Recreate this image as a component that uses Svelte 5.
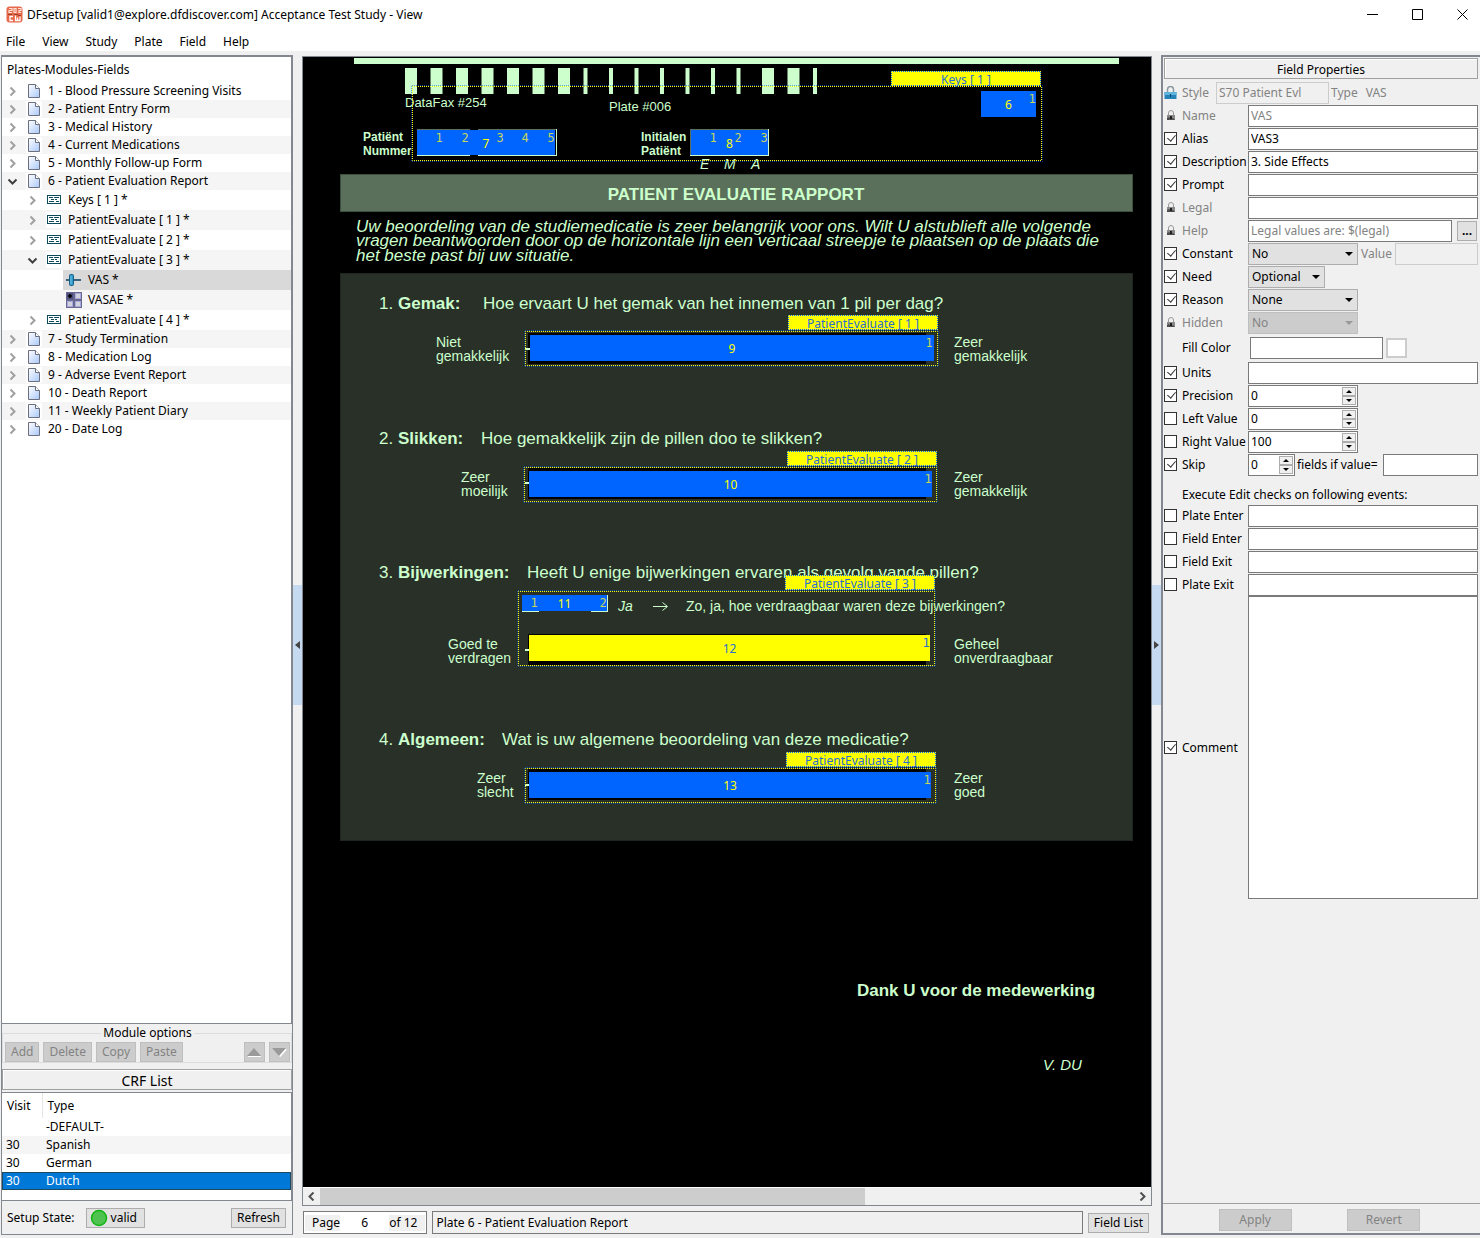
<script lang="ts">
  type Row = { id: string; level: number; open?: boolean; leaf?: "slider" | "check"; label: string };

  const menus = ["File", "View", "Study", "Plate", "Field", "Help"];

  const rows: Row[] = [
    { id: "p1", level: 0, label: "1 - Blood Pressure Screening Visits" },
    { id: "p2", level: 0, label: "2 - Patient Entry Form" },
    { id: "p3", level: 0, label: "3 - Medical History" },
    { id: "p4", level: 0, label: "4 - Current Medications" },
    { id: "p5", level: 0, label: "5 - Monthly Follow-up Form" },
    { id: "p6", level: 0, open: true, label: "6 - Patient Evaluation Report" },
    { id: "m0", level: 1, label: "Keys [ 1 ] *" },
    { id: "m1", level: 1, label: "PatientEvaluate [ 1 ] *" },
    { id: "m2", level: 1, label: "PatientEvaluate [ 2 ] *" },
    { id: "m3", level: 1, open: true, label: "PatientEvaluate [ 3 ] *" },
    { id: "f1", level: 2, leaf: "slider", label: "VAS *" },
    { id: "f2", level: 2, leaf: "check", label: "VASAE *" },
    { id: "m4", level: 1, label: "PatientEvaluate [ 4 ] *" },
    { id: "p7", level: 0, label: "7 - Study Termination" },
    { id: "p8", level: 0, label: "8 - Medication Log" },
    { id: "p9", level: 0, label: "9 - Adverse Event Report" },
    { id: "p10", level: 0, label: "10 - Death Report" },
    { id: "p11", level: 0, label: "11 - Weekly Patient Diary" },
    { id: "p20", level: 0, label: "20 - Date Log" },
  ];
  let selected = $state("f1");

  const crfs = [
    { visit: "", type: "-DEFAULT-" },
    { visit: "30", type: "Spanish" },
    { visit: "30", type: "German" },
    { visit: "30", type: "Dutch" },
  ];
  let crf = $state("Dutch");

  // barcode across the top of the page: wide = 1, narrow = 0
  const barcode = [1, 1, 1, 1, 1, 1, 1, 0, 0, 0, 0, 0, 0, 0, 1, 1, 0];

  const questions = [
    { n: "1.", y: 251, name: "Gemak:", x: 179, text: "Hoe ervaart U het gemak van het innemen van 1 pil per dag?" },
    { n: "2.", y: 386, name: "Slikken:", x: 177, text: "Hoe gemakkelijk zijn de pillen doo te slikken?" },
    { n: "3.", y: 520, name: "Bijwerkingen:", x: 223, text: "Heeft U enige bijwerkingen ervaren als gevolg vande pillen?" },
    { n: "4.", y: 687, name: "Algemeen:", x: 198, text: "Wat is uw algemene beoordeling van deze medicatie?" },
  ];

  const scaleLabels = [
    { x: 132, y: 289, lines: ["Niet", "gemakkelijk"] },
    { x: 650, y: 289, lines: ["Zeer", "gemakkelijk"] },
    { x: 157, y: 424, lines: ["Zeer", "moeilijk"] },
    { x: 650, y: 424, lines: ["Zeer", "gemakkelijk"] },
    { x: 144, y: 591, lines: ["Goed te", "verdragen"] },
    { x: 650, y: 591, lines: ["Geheel", "onverdraagbaar"] },
    { x: 173, y: 725, lines: ["Zeer", "slecht"] },
    { x: 650, y: 725, lines: ["Zeer", "goed"] },
  ];

  // black wells of the analogue scales, with the tick at the left end
  const wells = [
    { y: 275, tick: 291 },
    { y: 410, tick: 425 },
    { y: 576, tick: 592 },
    { y: 711, tick: 727 },
  ];

  const modules = [
    { x: 108, y: 28, w: 630, h: 75, tagX: 587, tagY: 13, label: "Keys [ 1 ]" },
    { x: 221, y: 273, w: 413, h: 35, tagX: 484, tagY: 257, label: "PatientEvaluate [ 1 ]" },
    { x: 220, y: 409, w: 413, h: 35, tagX: 483, tagY: 393, label: "PatientEvaluate [ 2 ]" },
    { x: 214, y: 533, w: 417, h: 75, tagX: 481, tagY: 517, label: "PatientEvaluate [ 3 ]" },
    { x: 221, y: 710, w: 411, h: 35, tagX: 482, tagY: 694, label: "PatientEvaluate [ 4 ]" },
  ];

  const fields = [
    { n: 6, x: 677, y: 33, w: 55, h: 26, marks: [728] },
    { n: 7, x: 113, y: 72, w: 138, h: 25, marks: [135, 161, 196, 221, 247] },
    { n: 8, x: 387, y: 72, w: 77, h: 25, marks: [409, 434, 460] },
    { n: 9, x: 226, y: 277, w: 404, h: 26, marks: [625] },
    { n: 10, x: 225, y: 413, w: 403, h: 26, marks: [624] },
    { n: 11, x: 218, y: 537, w: 85, h: 16, marks: [230, 299] },
    { n: 12, x: 225, y: 577, w: 401, h: 26, marks: [622], active: true },
    { n: 13, x: 225, y: 714, w: 402, h: 26, marks: [623] },
  ];
</script>

{#snippet lock()}
  <svg class="lock" width="13" height="11" viewBox="0 0 13 11" aria-hidden="true">
    <path d="M4.500 5V3a2.500 2.500 0 0 1 5 0v2" fill="none" stroke="#999" />
    <rect x="3" y="5" width="8" height="5" fill="#8a8a8a" />
    <path d="M3 8l2-1 2 2 2-1 2 2H3z" fill="#4d4d4d" />
    <rect x="6" y="6" width="2" height="3" fill="#222" />
  </svg>
{/snippet}

{#snippet tick(name: string, checked: boolean)}
  <input class="tick" type="checkbox" aria-label={name + " enabled"} {checked} />
{/snippet}

{#snippet textRow(id: string, name: string, checked: boolean, value: string)}
  <div class="row">
    {@render tick(name, checked)}
    <label for={id}>{name}</label>
    <input class="text grow" {id} type="text" {value} />
  </div>
{/snippet}

{#snippet arrow()}
  <svg class="arrow" width="8" height="4" viewBox="0 0 8 4" aria-hidden="true"><path d="M0 0h8L4 4z" /></svg>
{/snippet}

{#snippet spinner(name: string)}
  <span class="steps">
    <button aria-label={name + " up"}><svg width="6" height="3" viewBox="0 0 6 3"><path d="M0 3h6L3 0z" /></svg></button>
    <button aria-label={name + " down"}><svg width="6" height="3" viewBox="0 0 6 3"><path d="M0 0h6L3 3z" /></svg></button>
  </span>
{/snippet}

{#snippet spinRow(id: string, name: string, checked: boolean, value: string)}
  <div class="row">
    {@render tick(name, checked)}
    <label for={id}>{name}</label>
    <span class="spin wide">
      <input {id} type="text" {value} />
      {@render spinner(name)}
    </span>
  </div>
{/snippet}

<div class="app">
  <header>
    <div class="titlebar">
      <svg width="17" height="17" viewBox="0 0 17 17" aria-hidden="true">
        <rect x="0.500" y="0.500" width="16" height="16" rx="3" fill="#e8694a" />
        <path d="M3 2.500h3v2H3v2h3M8 2.500h2v4H8zM12 2.500h3v2h-2v2h2" fill="none" stroke="#fbe3da" stroke-width="1.200" />
        <path d="M2 8.500h4M8 8.500h3l2 1h2" fill="none" stroke="#9c3f2a" stroke-width="1" />
        <path d="M7 10.500H4v4h3M9.500 9.500v5h2v-3M14 10.500v4h-2" fill="none" stroke="#fff" stroke-width="1.300" />
      </svg>
      <h1>DFsetup [valid1@explore.dfdiscover.com] Acceptance Test Study - View</h1>
      <div class="winbuttons">
        <button aria-label="Minimize"><svg width="11" height="11" viewBox="0 0 11 11"><path d="M0 5.500h11" /></svg></button>
        <button aria-label="Maximize"><svg width="11" height="11" viewBox="0 0 11 11"><path d="M.5.5h10v10H.5z" /></svg></button>
        <button aria-label="Close"><svg width="11" height="11" viewBox="0 0 11 11"><path d="M.5.5l10 10M10.500.5l-10 10" /></svg></button>
      </div>
    </div>
    <nav>
      {#each menus as menu}
        <button>{menu}</button>
      {/each}
    </nav>
  </header>

  <main>
    <section class="left">
      <div class="tree">
        <h2>Plates-Modules-Fields</h2>
        <ul role="tree">
          {#each rows as row (row.id)}
            <li
              role="treeitem"
              aria-selected={selected === row.id}
              class="level{row.level}"
              class:selected={selected === row.id}
            >
              {#if !row.leaf}
                <button class="expander" class:open={row.open} aria-label="Toggle {row.label}">
                  <svg width="11" height="11" viewBox="0 0 11 11">
                    {#if row.open}
                      <path d="M1.500 3.500l4 4 4-4" />
                    {:else}
                      <path d="M3.500 1.500l4 4-4 4" />
                    {/if}
                  </svg>
                </button>
              {/if}
              <button class="item" onclick={() => (selected = row.id)}>
                {#if row.leaf === "slider"}
                  <svg width="16" height="16" viewBox="0 0 16 16">
                    <path d="M0 8h15" stroke="#3a6480" stroke-width="2" />
                    <rect x="3.500" y="2.500" width="4" height="11" rx="1" fill="#2e9bc9" stroke="#1b5e86" />
                    <path d="M5 4v8" stroke="#6cc0e6" />
                  </svg>
                {:else if row.leaf === "check"}
                  <svg width="16" height="16" viewBox="0 0 16 16">
                    <rect width="16" height="16" fill="#68688c" />
                    <rect x="1.500" y="1.500" width="5" height="5" fill="#7c7cb4" stroke="#4c4c84" />
                    <rect x="9.500" y="1.500" width="5" height="5" fill="#d2d2dc" stroke="#a8a8e0" />
                    <rect x="1.500" y="9.500" width="5" height="5" fill="#d2d2dc" stroke="#a8a8e0" />
                    <rect x="9.500" y="9.500" width="5" height="5" fill="#d2d2dc" stroke="#a8a8e0" />
                    <circle cx="4" cy="4" r="2" fill="#000" />
                  </svg>
                {:else if row.level === 1}
                  <svg width="16" height="16" viewBox="0 0 16 16">
                    <rect width="16" height="16" fill="#fff" />
                    <rect x="1.500" y="3.500" width="13" height="8" fill="#fff" stroke="#0d4a5c" />
                    <path d="M3 5.500h4M8 5.500h5M5 7.500h3M9 7.500h2M3 9.500h5M10 9.500h3" stroke="#0d4a5c" />
                  </svg>
                {:else}
                  <svg width="16" height="16" viewBox="0 0 16 16">
                    <defs>
                      <linearGradient id="sheet-{row.id}" x1="0" y1="0" x2="1" y2="1">
                        <stop offset="0" stop-color="#fff" />
                        <stop offset="1" stop-color="#a9c8fa" />
                      </linearGradient>
                    </defs>
                    <rect width="16" height="16" fill="#fff" />
                    <path d="M2.500 1.500h7l4 4v9h-11z" fill="url(#sheet-{row.id})" stroke="#6c6f7c" />
                    <path d="M9.500 1.500v4h4" fill="#fff" stroke="#6c6f7c" />
                  </svg>
                {/if}
                <span>{row.label}</span>
              </button>
            </li>
          {/each}
        </ul>
      </div>

      <fieldset>
        <legend>Module options</legend>
        <button class="btn" disabled>Add</button>
        <button class="btn" disabled>Delete</button>
        <button class="btn" disabled>Copy</button>
        <button class="btn" disabled>Paste</button>
        <button class="btn move first" disabled aria-label="Move up">
          <svg width="15" height="9" viewBox="0 0 15 9"><path d="M1 8.500h13" stroke="#fff" /><path d="M0 8h14L7 0z" fill="#9a9a9a" /></svg>
        </button>
        <button class="btn move" disabled aria-label="Move down">
          <svg width="15" height="9" viewBox="0 0 15 9"><path d="M14 1L7.500 8.500" stroke="#fff" stroke-width="2" /><path d="M0 0h14L7 8z" fill="#9a9a9a" /></svg>
        </button>
      </fieldset>

      <h2 class="caption crf-title">CRF List</h2>
      <div class="crf">
        <table>
          <thead>
            <tr><th>Visit</th><th>Type</th></tr>
          </thead>
          <tbody>
            {#each crfs as c}
              <tr class:current={crf === c.type} onclick={() => (crf = c.type)}>
                <td>{c.visit}</td>
                <td>{c.type}</td>
              </tr>
            {/each}
          </tbody>
        </table>
      </div>
      <div class="state">
        <span>Setup State:</span>
        <button class="btn valid">
          <svg width="18" height="18" viewBox="0 0 18 18" aria-hidden="true">
            <circle cx="9" cy="9" r="7.500" fill="#4fc24f" stroke="#12b512" stroke-width="1.500" />
          </svg>
          valid
        </button>
        <button class="btn refresh">Refresh</button>
      </div>
    </section>

    <button class="splitter" aria-label="Collapse tree">
      <svg width="5" height="8" viewBox="0 0 5 8"><path d="M5 0v8L0 4z" /></svg>
    </button>

    <section class="center">
      <div class="view">
        <div class="canvas">
          <svg class="page" width="848" height="1128" viewBox="0 0 848 1128" role="img" aria-label="Plate 6">
            <rect class="ink" x="50" y="0" width="765" height="6" />
            {#each barcode as wide, i}
              <rect class="ink" x={101 + i * 25.5} y="10" width={wide ? 12 : 4} height="26" />
            {/each}
            <text class="small" x="101" y="49">DataFax #254</text>
            <text class="small" x="305" y="53">Plate #006</text>
            <text class="key" x="59" y="83">Patiënt</text>
            <text class="key" x="59" y="97">Nummer</text>
            <text class="key" x="337" y="83">Initialen</text>
            <text class="key" x="337" y="97">Patiënt</text>
            <g class="label italic">
              <text x="396" y="111">E</text>
              <text x="420" y="111">M</text>
              <text x="447" y="111">A</text>
            </g>
            <path class="dim" d="M113 71.500h53M174 71.500h78M386 71.500h79M386.500 71v27" />
            <path class="bright" d="M113 97.500h53M174 97.500h79M252.500 71v27M386 97.500h79M464.500 71v27" />

            <rect x="36.500" y="116.500" width="792" height="37" fill="#5a705a" stroke="#3f4f3f" />
            <text class="title" x="432" y="142">PATIENT EVALUATIE RAPPORT</text>

            <g class="intro">
              <text x="52" y="174">Uw beoordeling van de studiemedicatie is zeer belangrijk voor ons. Wilt U alstublieft alle volgende</text>
              <text x="52" y="188">vragen beantwoorden door op de horizontale lijn een verticaal streepje te plaatsen op de plaats die</text>
              <text x="52" y="203">het beste past bij uw situatie.</text>
            </g>

            <rect x="36.500" y="215.500" width="792" height="567" fill="#283028" stroke="#1f261f" />
            {#each questions as q}
              <g class="question">
                <text x="75" y={q.y}>{q.n}</text>
                <text class="strong" x="94" y={q.y}>{q.name}</text>
                <text x={q.x} y={q.y}>{q.text}</text>
              </g>
            {/each}
            {#each scaleLabels as s}
              <g class="label">
                <text x={s.x} y={s.y}>{s.lines[0]}</text>
                <text x={s.x} y={s.y + 14}>{s.lines[1]}</text>
              </g>
            {/each}
            {#each wells as w}
              <rect x="224" y={w.y} width="398" height="31" />
              <path class="bright thick" d="M221 {w.tick}h5" />
            {/each}
            <path class="bright" d="M218 553.500h17M287 553.500h17M303.500 537v17" />
            <text class="label italic" x="314" y="553">Ja</text>
            <path class="bright" d="M349 548.500h14M358.500 544.500l5 4-5 4" />
            <text class="label" x="382" y="553">Zo, ja, hoe verdraagbaar waren deze bijwerkingen?</text>
            <text class="title" x="672" y="938">Dank U voor de medewerking</text>
            <text class="sign" x="739" y="1012">V. DU</text>

            {#each modules as m}
              <rect class="dots blue outer" x={m.x - 0.5} y={m.y - 0.5} width={m.w + 1} height={m.h + 1} />
              <rect class="dots" x={m.x + 0.5} y={m.y + 0.5} width={m.w - 1} height={m.h - 1} />
              <rect x={m.tagX} y={m.tagY} width="150" height="15" fill="#ff0" />
              <rect class="dots blue" x={m.tagX + 0.5} y={m.tagY + 0.5} width="149" height="14" />
              <text class="tag" x={m.tagX + 75} y={m.tagY + 13}>{m.label}</text>
            {/each}
            {#each fields as f}
              <g class="field" class:active={f.active}>
                <rect x={f.x} y={f.y} width={f.w} height={f.h} />
                <text class="num" x={f.x + f.w / 2} y={f.y + Math.round(f.h / 2) + 5}>{f.n}</text>
                {#each f.marks as x, i}
                  <text class="mark" {x} y={f.y + 12}>{i + 1}</text>
                {/each}
              </g>
            {/each}
          </svg>
        </div>
        <div class="scroll">
          <button aria-label="Scroll left"><svg width="7" height="9" viewBox="0 0 7 9"><path d="M5.500.5l-4 4 4 4" /></svg></button>
          <div class="track"><div class="thumb"></div></div>
          <button aria-label="Scroll right"><svg width="7" height="9" viewBox="0 0 7 9"><path d="M1.500.5l4 4-4 4" /></svg></button>
        </div>
      </div>
      <div class="status">
        <div class="pager">
          <label for="page">Page</label>
          <input id="page" type="text" value="6" />
          <span>of 12</span>
        </div>
        <div class="plate">Plate 6 - Patient Evaluation Report</div>
        <button class="btn">Field List</button>
      </div>
    </section>

    <button class="splitter" aria-label="Collapse properties">
      <svg width="5" height="8" viewBox="0 0 5 8"><path d="M0 0v8l5-4z" /></svg>
    </button>

    <section class="right">
      <h2 class="caption">Field Properties</h2>
      <div class="props">
        <div class="row style off">
          <svg class="lock" width="13" height="14" viewBox="0 0 13 14" aria-hidden="true">
            <path d="M3.500 7V3.500a3 3 0 0 1 6 0V7" fill="none" stroke="#8a979d" stroke-width="1.500" />
            <rect x="0.500" y="6" width="12" height="7" fill="#2583b8" />
            <rect x="0.500" y="6" width="12" height="3" fill="#5fb4de" />
            <rect x="6" y="8" width="1" height="3" fill="#0c3f63" />
          </svg>
          <label for="style">Style</label>
          <input class="text" id="style" type="text" value="S70 Patient Evl" disabled />
          <span>Type</span>
          <span class="type">VAS</span>
        </div>
        <div class="row off">
          {@render lock()}
          <label for="name">Name</label>
          <input class="text grow" id="name" type="text" value="VAS" readonly />
        </div>
        {@render textRow("alias", "Alias", true, "VAS3")}
        {@render textRow("desc", "Description", true, "3. Side Effects")}
        {@render textRow("prompt", "Prompt", true, "")}
        <div class="row off">
          {@render lock()}
          <label for="legal">Legal</label>
          <input class="text grow" id="legal" type="text" readonly />
        </div>
        <div class="row off">
          {@render lock()}
          <label for="help">Help</label>
          <input class="text grow" id="help" type="text" value="Legal values are: $(legal)" readonly />
          <button class="btn more" aria-label="Edit help">...</button>
        </div>
        <div class="row">
          {@render tick("Constant", true)}
          <label for="constant">Constant</label>
          <span class="select wide">
            <select id="constant"><option>No</option><option>Yes</option></select>
            {@render arrow()}
          </span>
          <label class="value off" for="value">Value</label>
          <input class="text grow" id="value" type="text" disabled />
        </div>
        <div class="row">
          {@render tick("Need", true)}
          <label for="need">Need</label>
          <span class="select">
            <select id="need"><option>Optional</option><option>Required</option></select>
            {@render arrow()}
          </span>
        </div>
        <div class="row">
          {@render tick("Reason", true)}
          <label for="reason">Reason</label>
          <span class="select wide">
            <select id="reason"><option>None</option></select>
            {@render arrow()}
          </span>
        </div>
        <div class="row off">
          {@render lock()}
          <label for="hidden">Hidden</label>
          <span class="select wide">
            <select id="hidden" disabled><option>No</option></select>
            {@render arrow()}
          </span>
        </div>
        <div class="row fill">
          <span class="tick-space"></span>
          <label for="fill">Fill Color</label>
          <input class="text" id="fill" type="text" />
          <button class="swatch" aria-label="Pick fill color"></button>
        </div>
        {@render textRow("units", "Units", true, "")}
        {@render spinRow("precision", "Precision", true, "0")}
        {@render spinRow("left", "Left Value", false, "0")}
        {@render spinRow("right", "Right Value", false, "100")}
        <div class="row">
          {@render tick("Skip", true)}
          <label for="skip">Skip</label>
          <span class="spin">
            <input id="skip" type="text" value="0" />
            {@render spinner("Skip")}
          </span>
          <label class="inline" for="skip-value">fields if value=</label>
          <input class="text grow" id="skip-value" type="text" />
        </div>
        <p>Execute Edit checks on following events:</p>
        {@render textRow("plate-enter", "Plate Enter", false, "")}
        {@render textRow("field-enter", "Field Enter", false, "")}
        {@render textRow("field-exit", "Field Exit", false, "")}
        {@render textRow("plate-exit", "Plate Exit", false, "")}
        <div class="row comment">
          {@render tick("Comment", true)}
          <label for="comment">Comment</label>
          <textarea id="comment"></textarea>
        </div>
      </div>
      <footer>
        <button class="btn" disabled>Apply</button>
        <button class="btn" disabled>Revert</button>
      </footer>
    </section>
  </main>
</div>

<style>
  :global(body) {
    background: #f0f0f0;
  }

  .app,
  .app * {
    box-sizing: border-box;
  }

  .app {
    --line: #828790;
    height: 100vh;
    display: flex;
    flex-direction: column;
    font: 12px/16px "Noto Sans", "Open Sans", sans-serif;
    color: #000;
  }

  button,
  input,
  select,
  textarea {
    font: inherit;
    color: inherit;
    margin: 0;
    padding: 0;
    border: 0;
    border-radius: 0;
    background: none;
  }

  h1,
  h2,
  p,
  ul {
    margin: 0;
    padding: 0;
    font-size: 12px;
    font-weight: normal;
  }

  svg {
    display: block;
    flex: none;
  }

  header {
    background: #fff;
  }

  .titlebar {
    height: 29px;
    display: flex;
    align-items: center;
    gap: 4px;
    padding-left: 6px;

    h1 {
      flex: 1;
    }
  }

  .winbuttons {
    display: flex;
    align-self: stretch;
    gap: 10px;

    button {
      width: 35px;
      display: grid;
      place-items: center;
    }

    path {
      fill: none;
      stroke: #000;
    }
  }

  nav {
    height: 22px;
    display: flex;
    align-items: center;
    gap: 17px;
    padding: 4px 6px 0;
  }

  main {
    flex: 1;
    min-height: 0;
    display: grid;
    grid-template-columns: 292px 9px minmax(0, 1fr) 9px 319px;
    padding: 4px 0 3px 1px;
  }

  section {
    min-height: 0;
    display: flex;
    flex-direction: column;
  }

  .left {
    border: 1px solid var(--line);
  }

  .tree {
    flex: 1;
    min-height: 0;
    overflow: hidden;
    background: #fff;
    border: 1px solid var(--line);
    border-width: 1px 1px 1px 0;

    h2 {
      height: 25px;
      padding: 5px;
    }

    ul {
      list-style: none;
    }

    li {
      display: flex;
      align-items: center;
      height: 18px;
      padding-left: 5px;
    }

    li:nth-child(even) {
      background: #f5f5f5;
    }

    .level1 {
      height: 20px;
      padding-left: 25px;
    }

    .level2 {
      height: 20px;
      padding-left: 61px;
    }

    .selected {
      background: #fff;
    }

    .selected .item {
      background: #d9d9d9;
    }
  }

  .expander {
    margin-right: 5px;

    path {
      fill: none;
      stroke: #a0a0a0;
      stroke-width: 2;
    }

    &.open path {
      stroke: #404040;
    }
  }

  .item {
    flex: 1;
    height: 100%;
    display: flex;
    align-items: center;
    gap: 6px;
    padding-left: 3px;
    text-align: left;
    white-space: nowrap;
  }

  .btn {
    height: 20px;
    padding: 0 5px;
    line-height: 16px;
    background: #e1e1e1;
    border: 1px solid #adadad;

    &:disabled {
      color: #838383;
      background: #ccc;
      border-color: #bfbfbf;
    }
  }

  fieldset {
    display: flex;
    align-items: center;
    gap: 4px;
    margin: 1px 0 6px;
    padding: 1px 1px 0 2px;
    border: 1px solid #dcdcdc;
    min-width: 0;

    legend {
      margin: 0 auto;
      padding: 0 2px;
    }

    .move {
      width: 21px;
      padding: 0;
      display: grid;
      place-items: center;
    }

    .first {
      margin-left: auto;
    }
  }

  .caption {
    height: 21px;
    line-height: 21px;
    text-align: center;
    border: 1px solid #a0a0a0;
    box-shadow: inset 1px 1px #fff;
  }

  .crf-title {
    font-size: 14px;
  }

  .crf {
    height: 109px;
    margin-top: 2px;
    background: #fff;
    border: 1px solid var(--line);
    border-left-width: 0;
    overflow: hidden;

    table {
      width: 100%;
      border-collapse: collapse;
    }

    th {
      height: 25px;
      padding: 0 5px;
      font-weight: normal;
      text-align: left;
    }

    th:first-child {
      width: 40px;
      border-right: 1px solid #e5e5e5;
    }

    td {
      height: 18px;
      padding: 0 4px;
      line-height: 16px;
    }

    tbody tr:nth-child(2) {
      background: #f5f5f5;
    }

    tbody .current {
      color: #fff;
      background: #0078d7;
      outline: 1px solid #1d4a5c;
      outline-offset: -1px;
    }
  }

  .state {
    height: 33px;
    display: flex;
    align-items: center;
    gap: 11px;
    padding: 1px 6px 0 5px;

    .refresh {
      margin-left: auto;
    }
  }

  .valid {
    display: flex;
    align-items: center;
    gap: 3px;
    padding: 0 7px 0 3px;
  }

  .splitter {
    height: 120px;
    align-self: center;
    display: grid;
    place-items: center;
    background: #c5d9f1;

    path {
      fill: #444;
    }
  }

  .center {
    gap: 5px;
    padding-top: 1px;
  }

  .view {
    flex: 1;
    min-height: 0;
    display: flex;
    flex-direction: column;
    border: 1px solid var(--line);
  }

  .canvas {
    flex: 1;
    min-height: 0;
    overflow: hidden;
    padding: 1px 0 0 1px;
    background: #000;
  }

  .page {
    font-family: "Liberation Sans", Arial, sans-serif;

    text {
      fill: #ccffcc;
    }

    .ink {
      fill: #ccffcc;
    }

    .small {
      font-size: 13px;
    }

    .key {
      font-size: 12px;
      font-weight: bold;
    }

    .label {
      font-size: 14px;
    }

    .italic {
      font-style: italic;
    }

    .title {
      font-size: 17px;
      font-weight: bold;
      text-anchor: middle;
    }

    .intro {
      font-size: 17px;
      font-style: italic;
    }

    .question {
      font-size: 17px;
    }

    .strong {
      font-weight: bold;
    }

    .sign {
      font-size: 15px;
      font-style: italic;
    }

    .dim {
      fill: none;
      stroke: #5a705a;
    }

    .bright {
      fill: none;
      stroke: #ccffcc;
    }

    .thick {
      stroke-width: 2;
    }

    .dots {
      fill: none;
      stroke: #ff0;
      stroke-dasharray: 1 1;
      stroke-dashoffset: 0.5;
    }

    .blue {
      stroke: #0064ff;
    }

    /* dots of the outer frame fall between those of the inner one */
    .outer {
      stroke-dashoffset: 1.5;
      stroke-opacity: 0.6;
    }

    .tag {
      font: 12px "Noto Sans", sans-serif;
      fill: #2a6fd0;
      text-anchor: middle;
    }
  }

  .page .field {
    rect {
      fill: #0064ff;
    }

    text {
      font: 12px "Noto Sans", sans-serif;
      fill: #ff0;
      text-anchor: middle;
    }

    .mark {
      font-family: "DejaVu Sans Mono", monospace;
      fill: #c6d65c;
    }

    &.active rect {
      fill: #ff0;
    }

    &.active text {
      fill: #2a6fd0;
    }
  }

  .scroll {
    height: 18px;
    display: flex;
    border-top: 1px solid #fff;

    button {
      width: 17px;
      display: grid;
      place-items: center;
    }

    path {
      fill: none;
      stroke: #505050;
      stroke-width: 2;
    }
  }

  .track {
    flex: 1;
  }

  .thumb {
    width: 67%;
    height: 100%;
    background: #cdcdcd;
  }

  .status {
    display: flex;
    align-items: center;
    gap: 5px;
    padding: 0 3px 1px 1px;
  }

  .pager,
  .plate {
    height: 23px;
    border: 1px solid #7a7a7a;
  }

  .pager {
    display: flex;
    align-items: center;
    padding: 1px;
    background: #fff;

    label {
      padding-left: 7px;
      background: #f0f0f0;
    }

    input {
      width: 49px;
      text-align: center;
    }

    span {
      padding-right: 8px;
      background: #f0f0f0;
    }
  }

  .plate {
    flex: 1;
    padding: 3px;
  }

  .right {
    border: 2px solid var(--line);
    border-right: 0;

    .caption {
      margin: 1px 2px 0 1px;
    }
  }

  .props {
    flex: 1;
    padding: 2px 2px 0 1px;

    p {
      padding: 11px 0 1px 18px;
    }
  }

  .row {
    height: 23px;
    display: flex;
    align-items: center;

    > .lock,
    > .tick,
    > .tick-space {
      flex: none;
      width: 13px;
      margin-right: 5px;
    }

    > label {
      width: 66px;
      flex: none;
      white-space: nowrap;
    }

    > .inline {
      width: auto;
      padding: 0 5px 0 2px;
    }

    > .value {
      width: 37px;
      padding-left: 3px;
    }
  }

  .off {
    color: #838383;
  }

  .tick {
    appearance: none;
    width: 13px;
    height: 13px;
    background: #fff;
    border: 1px solid #333;

    &:checked::after {
      content: "";
      display: block;
      width: 4px;
      height: 7px;
      margin: 0 0 0 4px;
      border: solid #333;
      border-width: 0 1px 1px 0;
      transform: rotate(40deg);
    }
  }

  .text {
    height: 22px;
    min-width: 0;
    padding: 0 2px;
    background: #fff;
    border: 1px solid #7a7a7a;

    &:disabled {
      background: #f0f0f0;
      border-color: #ccc;
    }
  }

  .grow {
    flex: 1;
  }

  .style {
    > label {
      width: 34px;
    }

    .text {
      width: 113px;
      margin-right: 2px;
    }

    .type {
      margin-left: 8px;
    }
  }

  .more {
    width: 20px;
    padding: 0;
    margin: 0 1px 0 5px;
    color: #000;
    font-weight: bold;
  }

  .select {
    position: relative;
    width: 77px;
    height: 22px;

    select {
      appearance: none;
      width: 100%;
      height: 100%;
      padding: 0 3px;
      background: #e1e1e1;
      border: 1px solid #adadad;
    }

    select:disabled {
      color: #838383;
      background: #ccc;
      border-color: #bfbfbf;
      opacity: 1;
    }

    .arrow {
      position: absolute;
      right: 5px;
      top: 9px;
      pointer-events: none;
    }
  }

  .off .arrow {
    fill: #9a9a9a;
  }

  .spin {
    display: flex;
    width: 47px;
    height: 22px;
    padding: 1px;
    background: #fff;
    border: 1px solid #7a7a7a;

    input {
      flex: 1;
      min-width: 0;
      padding: 0 1px;
    }
  }

  .wide {
    width: 110px;
  }

  .steps {
    width: 14px;
    display: flex;
    flex-direction: column;

    button {
      flex: 1;
      display: grid;
      place-items: center;
      background: #f0f0f0;
      border: 1px solid #adadad;
    }
  }

  .fill {
    height: 27px;

    .text {
      width: 133px;
      margin: 0 3px 0 2px;
    }
  }

  .swatch {
    width: 21px;
    height: 20px;
    background: #fff;
    border: 2px solid #ccc;
  }

  .comment {
    height: 303px;

    textarea {
      flex: 1;
      align-self: stretch;
      min-width: 0;
      resize: none;
      background: #fff;
      border: 1px solid #7a7a7a;
    }
  }

  footer {
    display: flex;
    justify-content: space-evenly;
    padding: 5px 4px 2px 0;
    border-top: 1px solid #a0a0a0;

    .btn {
      width: 73px;
      height: 22px;
    }
  }
</style>
